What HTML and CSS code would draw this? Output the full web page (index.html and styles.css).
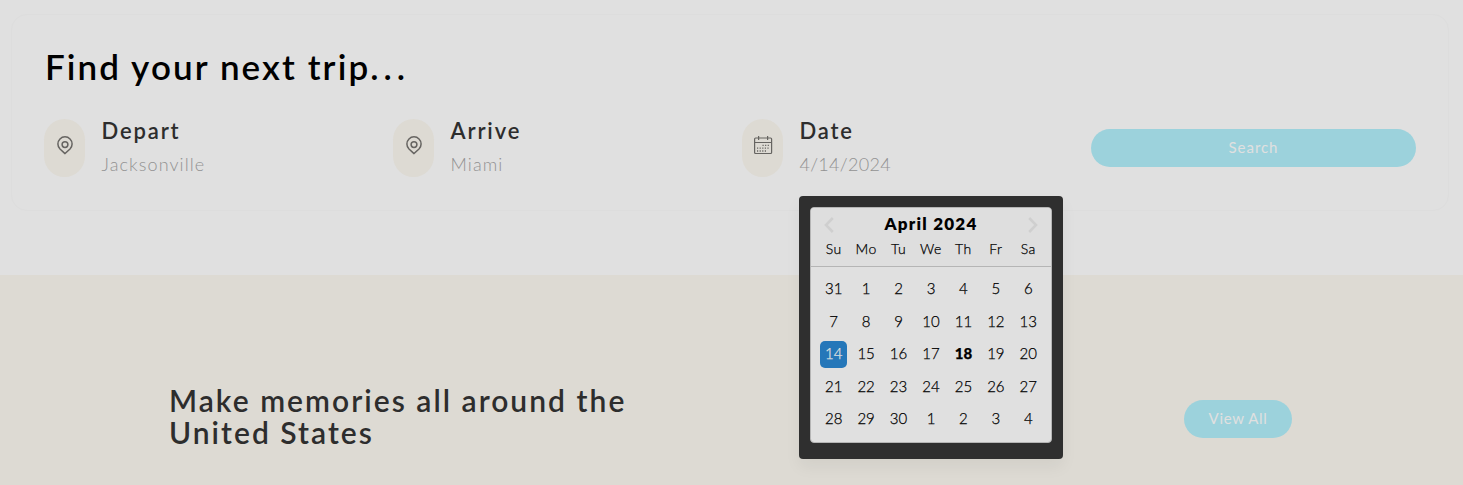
FILE: index.html
```
<!DOCTYPE html>
<html lang="en">
<head>
<meta charset="utf-8">
<title>Find your next trip</title>
<link rel="stylesheet" href="styles.css">
</head>
<body>
<main class="page">
  <section class="search-card">
    <h1 class="search-title">Find your next trip<span class="ellipsis">...</span></h1>
    <div class="fields">
      <div class="field">
        <span class="pill"><svg class="icon" viewBox="0 0 20 20"><path d="M10 17.600 5 13a7.100 7.100 0 1 1 10 0Z"/><circle cx="10" cy="8.600" r="2.900"/></svg></span>
        <div class="field-text"><h2 class="label">Depart</h2><p class="value">Jacksonville</p></div>
      </div>
      <div class="field">
        <span class="pill"><svg class="icon" viewBox="0 0 20 20"><path d="M10 17.600 5 13a7.100 7.100 0 1 1 10 0Z"/><circle cx="10" cy="8.600" r="2.900"/></svg></span>
        <div class="field-text"><h2 class="label">Arrive</h2><p class="value">Miami</p></div>
      </div>
      <div class="field">
        <span class="pill"><svg class="icon icon-cal" viewBox="0 0 20 20"><rect x="1.600" y="3" width="17" height="15.500" rx="1"/><path d="M1.600 7.500h17M5.600 1v4M14.600 1v4"/><path class="dots" d="M9.500 10.400h7.500M4 13.200h13M4 16h10"/></svg></span>
        <div class="field-text"><h2 class="label">Date</h2><p class="value value-date">4/14/2024</p></div>
        <div class="popover">
          <div class="calendar">
            <header class="cal-head">
              <div class="cal-nav">
                <svg class="chev" viewBox="0 0 10 16"><path d="M8.800 1 2 8l6.800 7"/></svg>
                <span class="month">April 2024</span>
                <svg class="chev" viewBox="0 0 10 16"><path d="M1.200 1 8 8l-6.800 7"/></svg>
              </div>
              <div class="week names"><span>Su</span><span>Mo</span><span>Tu</span><span>We</span><span>Th</span><span>Fr</span><span>Sa</span></div>
            </header>
            <div class="weeks">
              <div class="week"><span>31</span><span>1</span><span>2</span><span>3</span><span>4</span><span>5</span><span>6</span></div>
              <div class="week"><span>7</span><span>8</span><span>9</span><span>10</span><span>11</span><span>12</span><span>13</span></div>
              <div class="week"><span class="selected">14</span><span>15</span><span>16</span><span>17</span><span class="today">18</span><span>19</span><span>20</span></div>
              <div class="week"><span>21</span><span>22</span><span>23</span><span>24</span><span>25</span><span>26</span><span>27</span></div>
              <div class="week"><span>28</span><span>29</span><span>30</span><span>1</span><span>2</span><span>3</span><span>4</span></div>
            </div>
          </div>
        </div>
      </div>
      <button class="btn">Search</button>
    </div>
  </section>
  <section class="memories">
    <h2 class="memories-title">Make memories all around the United States</h2>
    <button class="btn btn-view">View All</button>
  </section>
</main>
</body>
</html>
```
FILE: styles.css
```
* { box-sizing: border-box; }
body {
  margin: 0;
  background: #e0e0e0;
  color: #2d2d2d;
  font-family: Lato, "Open Sans", sans-serif;
}
h1, h2, p { margin: 0; white-space: nowrap; }
.page { display: flex; flex-direction: column; height: 485px; overflow: hidden; }
.search-card {
  flex: none;
  height: 197px;
  margin: 14px 14px 64px 11px;
  padding: 29px 32px 0;
  border: 1px solid #dddddd;
  border-radius: 16px;
}
.search-title { height: 75px; font-size: 35px; line-height: 44px; font-weight: 600; letter-spacing: 2.1px; color: #000; padding-left: 1px; }
.ellipsis { letter-spacing: 5px; }
.fields { display: grid; grid-template-columns: repeat(4, 325px); column-gap: 24px; align-items: center; height: 58px; }
.field { display: flex; position: relative; height: 58px; }
.pill { display: flex; width: 41px; height: 58px; padding: 17px 0 0 10.5px; border-radius: 20.5px; background: #dddad3; }
.icon { width: 20px; height: 20px; fill: none; stroke: #666461; stroke-width: 1.5; }
.icon-cal { stroke-width: 1.2; margin-top: -1px; }
.dots { stroke-dasharray: 1.2 1.4; stroke-width: 1.3; }
.field-text { padding-left: 16.5px; }
.label { font-size: 22px; line-height: 24px; font-weight: 600; letter-spacing: 1.85px; }
.value { margin-top: 9px; font-size: 18px; line-height: 24px; font-weight: 300; letter-spacing: 1.1px; color: #929292; }
.value-date { letter-spacing: .3px; }
.btn {
  height: 38px;
  padding: 0 0 2px;
  border: 0;
  border-radius: 19px;
  background: #9cd2dc;
  color: #e0e0e0;
  font: 400 15px Lato, sans-serif;
  letter-spacing: .95px;
}
.popover {
  position: absolute;
  left: 57px;
  top: 77px;
  width: 264px;
  height: 263px;
  padding: 11px;
  border-radius: 4px;
  background: #2f2f2f;
  box-shadow: 0 8px 16px rgba(0, 0, 0, .05);
  color: #000;
}
.calendar { width: 242px; height: 236px; border: 1px solid #b5b5b5; border-radius: 4px; background: #e0e0e0; overflow: hidden; }
.cal-head { height: 59px; border-bottom: 1px solid #b5b5b5; background: #dedede; }
.cal-nav { display: flex; align-items: center; justify-content: space-between; height: 32px; padding: 0 13px; }
.chev { width: 10px; height: 16px; margin-top: 2px; fill: none; stroke: #cfcfcf; stroke-width: 2.6; }
.month { margin-top: -2px; font-size: 17px; font-weight: 800; letter-spacing: 1.25px; }
.week { display: grid; grid-template-columns: repeat(7, 27px); column-gap: 5.45px; justify-content: center; height: 27px; line-height: 25px; font-size: 15px; font-weight: 300; text-align: center; -webkit-text-stroke: .25px currentColor; }
.names { height: 20px; line-height: 18px; font-size: 14px; letter-spacing: .5px; }
.weeks { display: grid; row-gap: 5.5px; padding-top: 9px; }
.selected { border-radius: 5px; background: #2577b9; color: #e0e0e0; }
.today { font-weight: 900; }
.memories { display: flex; align-items: flex-start; justify-content: space-between; flex: 1; padding: 109px 171px 0 169px; background: #dddad3; }
.memories-title { width: 480px; white-space: normal; font-size: 30px; line-height: 32px; font-weight: 600; letter-spacing: 2.03px; }
.btn-view { width: 108px; margin-top: 16px; letter-spacing: .65px; }
```
